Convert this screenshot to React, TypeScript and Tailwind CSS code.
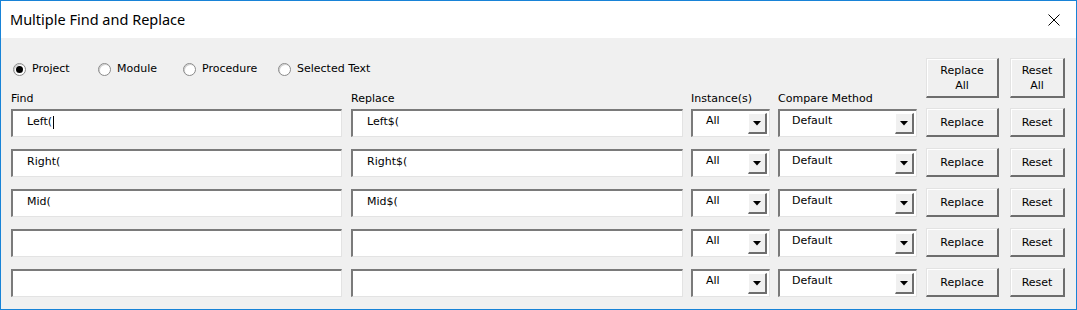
import { ReactNode } from 'react';

const ui = { fontFamily: '"DejaVu Sans", Tahoma, sans-serif' };

const rows = [
  { find: 'Left(', replace: 'Left$(', caret: true },
  { find: 'Right(', replace: 'Right$(' },
  { find: 'Mid(', replace: 'Mid$(' },
  { find: '', replace: '' },
  { find: '', replace: '' },
];

function Sunken({ className, children }: { className: string; children?: ReactNode }) {
  return (
    <div
      className={`h-[28px] bg-white border-t-2 border-l-2 border-t-[#7a7a7a] border-l-[#7a7a7a] border-b border-r border-b-[#e3e3e3] border-r-[#e3e3e3] ${className}`}
    >
      {children}
    </div>
  );
}

function TextBox({ value, caret }: { value: string; caret?: boolean }) {
  return (
    <Sunken className="w-full pl-[14px] pt-[4px] text-[11px] leading-[14px] text-black">
      <span className="inline-flex items-center">
        {value}
        {caret && <span className="inline-block w-px h-[13px] bg-black ml-[1px]" />}
      </span>
    </Sunken>
  );
}

function Combo({ value, pad }: { value: string; pad: string }) {
  return (
    <Sunken className="w-full flex items-stretch text-[11px] leading-[14px] text-black">
      <div className={`flex-1 pt-[3px] ${pad}`}>{value}</div>
      <div className="w-[19px] my-[2px] mr-[2px] bg-[#f0f0f0] border-t border-l border-t-white border-l-white border-b-2 border-r-2 border-b-[#6d6d6d] border-r-[#6d6d6d] flex items-center justify-center">
        <svg width="8" height="5" viewBox="0 0 8 5">
          <path d="M0 0H8L4 4.5Z" fill="#000" />
        </svg>
      </div>
    </Sunken>
  );
}

function Button({ className, children }: { className: string; children: ReactNode }) {
  return (
    <div
      className={`bg-[#f0f0f0] border-t border-l border-t-[#e3e3e3] border-l-[#e3e3e3] border-b-2 border-r-2 border-b-[#6d6d6d] border-r-[#6d6d6d] shadow-[inset_1px_1px_0_#ffffff] flex items-center justify-center text-center text-[11px] leading-[15px] text-black ${className}`}
    >
      {children}
    </div>
  );
}

function Radio({ label, checked, width }: { label: string; checked?: boolean; width: string }) {
  return (
    <div className={`flex items-center gap-[6px] ${width}`}>
      <div className="w-[13px] h-[13px] rounded-full bg-white border border-[#8a8a8a] shadow-[inset_1px_1px_0_#cfcfcf] flex items-center justify-center">
        {checked && <div className="w-[7px] h-[7px] rounded-full bg-black" />}
      </div>
      <span className="text-[11px] leading-[14px]">{label}</span>
    </div>
  );
}

export default function App() {
  return (
    <div className="w-[1077px] h-[310px] border border-[#1883d7] bg-[#f0f0f0] flex flex-col text-black" style={ui}>
      <div className="h-[37px] shrink-0 bg-white flex items-center justify-between pl-[9px] pr-[16px]">
        <span className="text-[14.5px]" style={{ fontFamily: '"Noto Sans", sans-serif' }}>
          Multiple Find and Replace
        </span>
        <svg width="12" height="12" viewBox="0 0 12 12">
          <path d="M0.5 0.5L11.5 11.5M11.5 0.5L0.5 11.5" stroke="#000" strokeWidth="1" />
        </svg>
      </div>

      <div className="pl-[10px] flex flex-col">
        <div className="h-[71px] flex items-start">
          <div className="w-[906px] flex flex-col">
            <div className="h-[16px] mt-[23px] pl-[2px] flex items-center">
              <Radio label="Project" checked width="w-[85px]" />
              <Radio label="Module" width="w-[85px]" />
              <Radio label="Procedure" width="w-[95px]" />
              <Radio label="Selected Text" width="w-[120px]" />
            </div>
            <div className="mt-[15px] flex text-[11px] leading-[14px]">
              <span className="w-[340px]">Find</span>
              <span className="w-[340px]">Replace</span>
              <span className="w-[87px]">Instance(s)</span>
              <span>Compare Method</span>
            </div>
          </div>
          <div className="ml-[9px] mt-[20px] flex gap-[11px]">
            <Button className="w-[73px] h-[40px]">
              Replace
              <br />
              All
            </Button>
            <Button className="w-[55px] h-[40px]">
              Reset
              <br />
              All
            </Button>
          </div>
        </div>

        <div className="flex flex-col gap-[12px]">
          {rows.map((r, i) => (
            <div key={i} className="h-[28px] flex items-start">
              <div className="w-[331px]">
                <TextBox value={r.find} caret={r.caret} />
              </div>
              <div className="w-[332px] ml-[9px]">
                <TextBox value={r.replace} />
              </div>
              <div className="w-[79px] ml-[8px]">
                <Combo value="All" pad="pl-[13px]" />
              </div>
              <div className="w-[139px] ml-[8px]">
                <Combo value="Default" pad="pl-[12px]" />
              </div>
              <Button className="w-[73px] h-[29px] ml-[9px] -mt-px">Replace</Button>
              <Button className="w-[55px] h-[29px] ml-[11px] -mt-px">Reset</Button>
            </div>
          ))}
        </div>
      </div>
    </div>
  );
}
